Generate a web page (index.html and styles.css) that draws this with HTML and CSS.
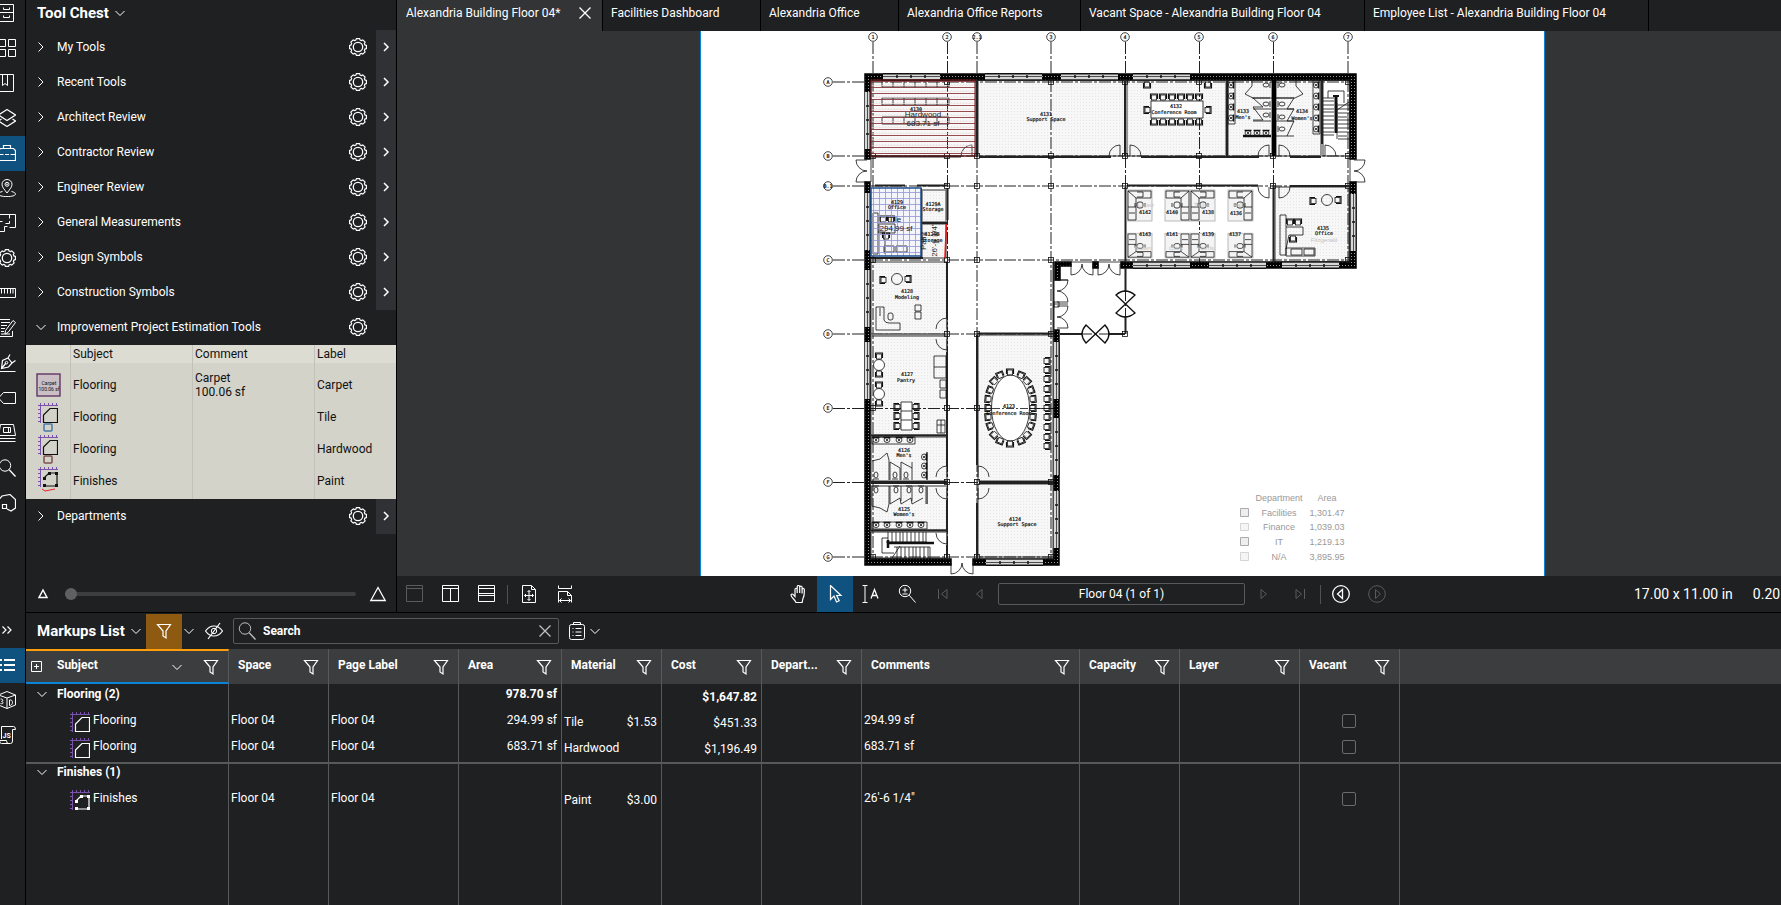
FILE: index.html
```html
<!DOCTYPE html>
<html lang="en">
<head>
<meta charset="utf-8">
<title>Alexandria Building Floor 04</title>
<link rel="stylesheet" href="styles.css">
</head>
<body>
<svg class="defs" aria-hidden="true">
  <symbol id="i-gear" viewBox="-9 -9 18 18"><path stroke-width="1.2" d="M8.4 1.6 6.9 2.1 6.4 3.4 7.1 4.8 4.8 7.1 3.4 6.4 2.1 6.9 1.6 8.4-1.6 8.4-2.1 6.9-3.4 6.4-4.8 7.1-7.1 4.8-6.4 3.4-6.9 2.1-8.4 1.6-8.4-1.6-6.9-2.1-6.4-3.4-7.1-4.8-4.8-7.1-3.4-6.4-2.1-6.9-1.6-8.4 1.6-8.4 2.1-6.9 3.4-6.4 4.8-7.1 7.1-4.8 6.4-3.4 6.9-2.1 8.4-1.6z"/><circle r="4.7" stroke-width="1.3"/></symbol>
  <symbol id="i-right" viewBox="-9 -9 18 18"><path d="M-2.5-4.5 2-0-2.5 4.5"/></symbol>
  <symbol id="i-rightb" viewBox="-9 -9 18 18"><path stroke-width="1.5" d="M-2-4 2 0-2 4"/></symbol>
  <symbol id="i-down" viewBox="-9 -9 18 18"><path d="M-4.5-2 0 2.5 4.5-2"/></symbol>
  <symbol id="i-x" viewBox="-9 -9 18 18"><path stroke-width="1.3" d="M-5.5-5.5 5.5 5.5M5.5-5.5-5.5 5.5"/></symbol>
  <symbol id="i-cabinet" viewBox="-9 -9 18 18"><path d="M-7.5-8.5h14v17h-14zM-7.5-.5h14M-3.5-5.500v2h6v-2M-3.500 2.500v2h6v-2"/></symbol>
  <symbol id="i-grid" viewBox="-9 -9 18 18"><path d="M-8.500-8.500h7v7h-7zM1.500-8.500h7v7h-7zM-8.500 1.500h7v7h-7zM1.500 1.500h7v7h-7z"/></symbol>
  <symbol id="i-book" viewBox="-9 -9 18 18"><path d="M-7.500-8.500h14v17h-14zM-4.500-8.500V2.500L-2 .500.500 2.500V-8.500"/></symbol>
  <symbol id="i-layers" viewBox="-9 -9 18 18"><path stroke-width="1.200" d="M0-8.500 8.500-3 0 2.500-8.500-3zM-5.500 1-8.500 3 0 8.500 8.500 3 5.500 1"/></symbol>
  <symbol id="i-chest" viewBox="-9 -9 18 18"><path stroke-width="1.200" d="M-8.500-2.500l2-2h13l2 2v10h-17zM-3.500-4.500v-3h7v3M-8.500 1.500h5M-2 1.500h4M3.500 1.500h5"/></symbol>
  <symbol id="i-pin" viewBox="-9 -9 18 18"><path d="M0 5C-3 1-5-1-5-3.700a5 4.800 0 0 1 10 0C5-1 3 1 0 5zM-4.500 3.500C-7 4-8.500 5-8.500 6c0 1.500 3.500 2.600 8.500 2.600S8.500 7.500 8.500 6c0-1-1.500-2-4-2.500"/><circle cy="-3.700" r="2"/><circle cy="-3.700" r=".5"/></symbol>
  <symbol id="i-plan" viewBox="-9 -9 18 18"><path d="M-8.500-8.500h17v13h-6M-8.500-8.500v17h6v-5h3M2.500-8.500v4M2.500-2v2.500h-4M-8.500-1.500h4"/></symbol>
  <symbol id="i-ruler" viewBox="-9 -9 18 18"><path d="M-8.500-4.500h17v9h-17zM-5.500-4.500v5M-2.500-4.500v5M.500-4.500v5M3.500-4.500v5M6-4.500v5"/></symbol>
  <symbol id="i-edit" viewBox="-9 -9 18 18"><path d="M3-8.500H-8.500v17H5.500V3M-6-5.500h9M-6-2.500h6M-6 .500h4M-6 3.500h3M-6 6h9"/><path d="M8.500-5.500 1 4.500l-3 1.500.5-3.500L6-7.500z"/></symbol>
  <symbol id="i-pen" viewBox="-9 -9 18 18"><path stroke-width="1.200" d="M-8.500 8.500h17M-5.500 5.500l1-8L1-5l4 5-3.500 4zM-5.500 5.500-1 0M1-5l2-3.500M5 0l3.500-2.500"/><circle r="1.300" cx="-.5" cy="-.3"/></symbol>
  <symbol id="i-tag" viewBox="-9 -9 18 18"><path d="M8.500-5.500h-12L-8.500 0l5 5.500h12z"/></symbol>
  <symbol id="i-stack" viewBox="-9 -9 18 18"><path d="M-6.500-8.500h13l2 11h-17zM-3.500-5.500h7v5h-7zM1.500-5v4M-8.500 5.500h17M-8.500 8.500h17M-8.500 2.500v6"/></symbol>
  <symbol id="i-search" viewBox="-9 -9 18 18"><circle cx="-2" cy="-2.500" r="5.700"/><path stroke-width="1.300" d="M2.200 1.700 8.500 8.500"/></symbol>
  <symbol id="i-shape" viewBox="-9 -9 18 18"><path stroke-width="1.200" d="M-8 6.500v-10l3-3.500 8-1.500 5.500 5V5L4 8l-4-2M-4.500 1.500h4v4h-4z"/></symbol>
  <symbol id="i-dbl" viewBox="-9 -9 18 18"><path stroke-width="1.200" d="M-4.500-3.500-1 0-4.500 3.500M.500-3.500 4 0 .500 3.500"/></symbol>
  <symbol id="i-list" viewBox="-9 -9 18 18"><path stroke-width="2" d="M-3-5H8M-3 0H8M-3 5H8M-7-5h2M-7 0h2M-7 5h2"/></symbol>
  <symbol id="i-3d" viewBox="-9 -9 18 18"><path d="M0-8.500 8.500-5v10L0 8.500-8.500 5V-5zM-8.500-5 0-2 8.500-5M0-2V8.500M-6.500-1c3 0 3 2 1 2.500 2.500.5 2 3-1 2M2.500 0v5.500c4 0 4-6.500 0-5.500z"/></symbol>
  <symbol id="i-js" viewBox="-9 -9 18 18"><path d="M-5.500 4V-8.500h12q2 0 2 3h-3V6q0 2.500-2 2.500h-9q-2 0-2-3h7q0 3 2 3"/><text x="-4.500" y="2.500" class="js">JS</text></symbol>
  <symbol id="i-filter" viewBox="-9 -9 18 18"><path stroke-width="1.200" d="M-6.500-6.500h13L2 0v7l-3-2V0z"/></symbol>
  <symbol id="i-eye" viewBox="-9 -9 18 18"><path stroke-width="1.200" d="M-8.500 0Q-5-5 0-5t8.500 5Q5 5 0 5T-8.500 0zM-6 8 6-8"/><circle r="2.700"/></symbol>
  <symbol id="i-clip" viewBox="-9 -9 18 18"><rect x="-7.500" y="-6.500" width="15" height="15" rx="2"/><path d="M-3.500-6.500v-2h7v2zM-4.500-2.500h1M-4.500 1h1M-4.500 4.500h1M-1.500-2.500h6M-1.500 1h6M-1.500 4.500h6"/></symbol>
  <symbol id="i-single" viewBox="-9 -9 18 18"><path d="M-8.500-8.500h16v16h-16zM-8.500-5.500h16"/></symbol>
  <symbol id="i-cols" viewBox="-9 -9 18 18"><path d="M-8.500-8.500h16v16h-16zM-8.500-5.500h16M-.500-5.500v13"/></symbol>
  <symbol id="i-rows" viewBox="-9 -9 18 18"><path d="M-8.500-8.500h16v16h-16zM-8.500-5.500h16M-8.500-.500h16M-8.500 1.500h16"/></symbol>
  <symbol id="i-fitpage" viewBox="-9 -9 18 18"><path d="M-6.500-8.500h9l4 4v13h-13zM2.500-8.500v4h4M-4.500 1.500h9M0-3.500v10M-3 0-4.500 1.500-3 3M3 0l1.500 1.500L3 3M-1.500-2 0-3.500 1.500-2M-1.500 5 0 6.500 1.500 5"/></symbol>
  <symbol id="i-fitwidth" viewBox="-9 -9 18 18"><path d="M-6.500-8.500v3h13v-3M-6.500 8.500v-11h9l4 4v7M2.500-2.500v4h4M-5.500 6.500h11M-3.500 4.500l-2 2 2 2M3.500 4.500l2 2-2 2"/></symbol>
  <symbol id="i-hand" viewBox="-9 -9 18 18"><path stroke-width="1.200" d="M-3 8.500c-1-3-5-5-5-7.500 0-1.300 1.700-1.300 2.500-.2l1.500 1.700v-7c0-1.700 2-1.700 2.200 0V-1v-6c0-2 2.400-2 2.500 0v6-5.500c0-1.800 2.300-1.800 2.400 0V-.500v-4c0-1.600 2.100-1.600 2.200 0 .3 5-.3 7-1.300 9-.6 1.300-.5 2.500-.8 4z"/></symbol>
  <symbol id="i-arrow" viewBox="-9 -9 18 18"><path stroke-width="1.200" d="M-4.500-8.500v14l3.500-3.500 2.500 6 2.700-1.200L1.700 1.500H6z"/></symbol>
  <symbol id="i-text" viewBox="-9 -9 18 18"><path d="M-8.500-8.500h5M-6-8.500v17M-8.500 8.500h5"/><path stroke-width="1.300" d="M0 4.500 3.500-4.500 7 4.500M1.200 1.500h4.500"/></symbol>
  <symbol id="i-zoom" viewBox="-9 -9 18 18"><circle cx="-2" cy="-3" r="5.700"/><path d="M2.200 1.200 8.500 8.500M-4.500-4h5M-2-6.500v5M-4.500 0h5"/></symbol>
  <symbol id="i-first" viewBox="-9 -9 18 18"><path d="M-4.500-5v10M4-4.500v9L-1.500 0z"/></symbol>
  <symbol id="i-prev" viewBox="-9 -9 18 18"><path d="M3-4.500v9L-2.500 0z"/></symbol>
  <symbol id="i-next" viewBox="-9 -9 18 18"><path d="M-3-4.500v9L2.500 0z"/></symbol>
  <symbol id="i-last" viewBox="-9 -9 18 18"><path d="M4.500-5v10M-4-4.500v9L1.500 0z"/></symbol>
  <symbol id="i-back" viewBox="-9 -9 18 18"><circle r="8.300" stroke-width="1.300"/><path stroke-width="1.300" d="M1.500-4.500v9L-3.500 0z"/></symbol>
  <symbol id="i-fwd" viewBox="-9 -9 18 18"><circle r="8.300"/><path d="M-1.500-4.500v9L3.500 0z"/></symbol>
  <symbol id="i-plus" viewBox="-9 -9 18 18"><path d="M-5.500-5.500h10v10h-10zM-3-.500h5M-.500-3v5"/></symbol>
  <symbol id="i-area" viewBox="0 0 20 20"><path class="tick" d="M2.500 0v20M0 2.500h20M6.500 0v2M10.500 0v2M14.500 0v2M18.500 0v2M0 6.500h2M0 10.500h2M0 14.500h2M0 18.500h2"/><path stroke-width="1.200" d="M5.500 19.500V12L12 5.500h7.500v14z"/></symbol>
  <symbol id="i-poly" viewBox="0 0 20 20"><path class="tick" d="M2.500 0v20M0 2.500h20M6.500 0v2M10.500 0v2M14.500 0v2M18.500 0v2M0 6.500h2M0 10.500h2M0 14.500h2M0 18.500h2"/><path stroke-width="1.200" d="M6 11l5-5h8v13H6"/><path fill="currentColor" stroke="none" d="M5 10h3v3H5zM10 5h3v3h-3zM17 5h3v3h-3zM17 17h3v3h-3zM5 17h3v3H5z"/></symbol>
</svg>

<main class="app">
  <section class="upper">
    <nav class="rail" aria-label="Panels">
      <button aria-label="File access"><svg class="ic"><use href="#i-cabinet"/></svg></button>
      <button aria-label="Thumbnails"><svg class="ic"><use href="#i-grid"/></svg></button>
      <button aria-label="Bookmarks"><svg class="ic"><use href="#i-book"/></svg></button>
      <button aria-label="Layers"><svg class="ic"><use href="#i-layers"/></svg></button>
      <button class="on" aria-label="Tool chest"><svg class="ic"><use href="#i-chest"/></svg></button>
      <button aria-label="Places"><svg class="ic"><use href="#i-pin"/></svg></button>
      <button aria-label="Spaces"><svg class="ic"><use href="#i-plan"/></svg></button>
      <button aria-label="Properties"><svg class="ic"><use href="#i-gear"/></svg></button>
      <button aria-label="Measurements"><svg class="ic"><use href="#i-ruler"/></svg></button>
      <button aria-label="Forms"><svg class="ic"><use href="#i-edit"/></svg></button>
      <button aria-label="Signatures"><svg class="ic"><use href="#i-pen"/></svg></button>
      <button aria-label="Tags"><svg class="ic"><use href="#i-tag"/></svg></button>
      <button aria-label="Sets"><svg class="ic"><use href="#i-stack"/></svg></button>
      <button aria-label="Search"><svg class="ic"><use href="#i-search"/></svg></button>
      <button aria-label="Studio"><svg class="ic"><use href="#i-shape"/></svg></button>
    </nav>

    <aside class="chest">
      <button class="title">Tool Chest <svg class="ic"><use href="#i-down"/></svg></button>
      <div class="tool"><button class="name"><svg class="ic"><use href="#i-right"/></svg>My Tools</button><button class="gear" aria-label="Options"><svg class="ic"><use href="#i-gear"/></svg></button><button class="more" aria-label="Open"><svg class="ic"><use href="#i-rightb"/></svg></button></div>
      <div class="tool"><button class="name"><svg class="ic"><use href="#i-right"/></svg>Recent Tools</button><button class="gear" aria-label="Options"><svg class="ic"><use href="#i-gear"/></svg></button><button class="more" aria-label="Open"><svg class="ic"><use href="#i-rightb"/></svg></button></div>
      <div class="tool"><button class="name"><svg class="ic"><use href="#i-right"/></svg>Architect Review</button><button class="gear" aria-label="Options"><svg class="ic"><use href="#i-gear"/></svg></button><button class="more" aria-label="Open"><svg class="ic"><use href="#i-rightb"/></svg></button></div>
      <div class="tool"><button class="name"><svg class="ic"><use href="#i-right"/></svg>Contractor Review</button><button class="gear" aria-label="Options"><svg class="ic"><use href="#i-gear"/></svg></button><button class="more" aria-label="Open"><svg class="ic"><use href="#i-rightb"/></svg></button></div>
      <div class="tool"><button class="name"><svg class="ic"><use href="#i-right"/></svg>Engineer Review</button><button class="gear" aria-label="Options"><svg class="ic"><use href="#i-gear"/></svg></button><button class="more" aria-label="Open"><svg class="ic"><use href="#i-rightb"/></svg></button></div>
      <div class="tool"><button class="name"><svg class="ic"><use href="#i-right"/></svg>General Measurements</button><button class="gear" aria-label="Options"><svg class="ic"><use href="#i-gear"/></svg></button><button class="more" aria-label="Open"><svg class="ic"><use href="#i-rightb"/></svg></button></div>
      <div class="tool"><button class="name"><svg class="ic"><use href="#i-right"/></svg>Design Symbols</button><button class="gear" aria-label="Options"><svg class="ic"><use href="#i-gear"/></svg></button><button class="more" aria-label="Open"><svg class="ic"><use href="#i-rightb"/></svg></button></div>
      <div class="tool"><button class="name"><svg class="ic"><use href="#i-right"/></svg>Construction Symbols</button><button class="gear" aria-label="Options"><svg class="ic"><use href="#i-gear"/></svg></button><button class="more" aria-label="Open"><svg class="ic"><use href="#i-rightb"/></svg></button></div>
      <div class="tool open"><button class="name"><svg class="ic"><use href="#i-down"/></svg>Improvement Project Estimation Tools</button><button class="gear" aria-label="Options"><svg class="ic"><use href="#i-gear"/></svg></button></div>
      <table class="set">
        <colgroup><col class="c-icon"><col class="c-wide"><col class="c-wide"><col></colgroup>
        <thead><tr><th></th><th>Subject</th><th>Comment</th><th>Label</th></tr></thead>
        <tbody>
          <tr class="gap"><td></td><td></td><td></td><td></td></tr>
          <tr><td><svg class="thumb" viewBox="0 0 28 32"><rect x="3" y="5" width="23" height="22" fill="#c9bfc5" stroke="#5a2a5e" stroke-width="1.300"/><text x="15" y="16" class="tiny">Carpet</text><text x="15" y="22" class="tiny">100.06 sf</text></svg></td><td>Flooring</td><td>Carpet<br>100.06 sf</td><td>Carpet</td></tr>
          <tr><td><svg class="thumb" viewBox="0 0 28 32"><use href="#i-area" x="4" y="2" width="20" height="20"/><rect x="10" y="23" width="8" height="7" rx="1" stroke="#4a7ba6" stroke-width="1.500"/></svg></td><td>Flooring</td><td></td><td>Tile</td></tr>
          <tr><td><svg class="thumb" viewBox="0 0 28 32"><use href="#i-area" x="4" y="2" width="20" height="20"/><rect x="10" y="23" width="8" height="7" rx="1" stroke="#7d5050" stroke-width="1.500"/></svg></td><td>Flooring</td><td></td><td>Hardwood</td></tr>
          <tr><td><svg class="thumb" viewBox="0 0 28 32"><use href="#i-poly" x="4" y="2" width="20" height="20"/><path d="M8 24l3 2 10-2" stroke="#e22"/></svg></td><td>Finishes</td><td></td><td>Paint</td></tr>
          <tr class="end"><td></td><td></td><td></td><td></td></tr>
        </tbody>
      </table>
      <div class="tool"><button class="name"><svg class="ic"><use href="#i-right"/></svg>Departments</button><button class="gear" aria-label="Options"><svg class="ic"><use href="#i-gear"/></svg></button><button class="more" aria-label="Open"><svg class="ic"><use href="#i-rightb"/></svg></button></div>
      <div class="size">
        <svg class="ic" viewBox="-9 -9 18 18"><path stroke-width="1.500" d="M0-4 4 3.500H-4z"/></svg>
        <input type="range" min="0" max="100" value="0" aria-label="Symbol size">
        <svg class="ic" viewBox="-9 -9 18 18"><path stroke-width="1.300" d="M0-6.500 7.200 6.500H-7.200z"/></svg>
      </div>
    </aside>

    <section class="doc">
      <div class="tabs" role="tablist">
        <button class="tab cur">Alexandria Building Floor 04*<svg class="ic"><use href="#i-x"/></svg></button>
        <button class="tab t2">Facilities Dashboard</button>
        <button class="tab t3">Alexandria Office</button>
        <button class="tab t4">Alexandria Office Reports</button>
        <button class="tab t5">Vacant Space - Alexandria Building Floor 04</button>
        <button class="tab t5">Employee List - Alexandria Building Floor 04</button>
      </div>
      <div class="canvas">
        <div class="page">
        <svg class="plan" viewBox="701 31 843 545" preserveAspectRatio="xMinYMin slice" role="img" aria-label="Floor plan">
          <defs>
            <pattern id="dots" width="3" height="3" patternUnits="userSpaceOnUse"><rect width="3" height="3" fill="#f7f7f7"/><rect width="1" height="1" fill="#e6e6e6"/></pattern>
            <pattern id="hatch" width="3" height="3" patternUnits="userSpaceOnUse"><rect width="3" height="3" fill="#000"/><rect x="1" y="1" width="1" height="1" fill="#999"/></pattern>
            <pattern id="wood" width="10" height="6" y="3" patternUnits="userSpaceOnUse"><path d="M0 .500h10" stroke="#8c3a3e" stroke-width=".9"/><path d="M0 4.500h10" stroke="#eed6d8" stroke-width=".5"/></pattern>
            <pattern id="tile" width="6" height="6" x="3" patternUnits="userSpaceOnUse"><path d="M.500 0v6M0 .500h6" stroke="#9394d6" stroke-width=".8"/></pattern>
            <g id="chair"><rect x="-2.500" y="-2" width="5" height="5"/><path d="M-3.500 2v-5h7v5" stroke-width="1.100"/></g>
            <g id="toilet"><ellipse cy="1" rx="2" ry="3"/><path d="M-3-3h6"/></g>
            <g id="sink"><ellipse rx="3" ry="2.500"/><path d="M-3.500-2.500h7M0-1v2" stroke-width="1.500"/></g>
            <g id="door"><path d="M0 0v-11M0-11A11 11 0 0 0-11 0"/></g>
            <g id="dbl"><path d="M0-11h11M0 11h11M0-11A11 11 0 0 0 11 0M0 11A11 11 0 0 1 11 0"/></g>
            <g id="win"><rect width="57" height="7" fill="#d8d8d8" stroke="none"/><path d="M0 .800h57" stroke-width="1.400"/><path d="M0 3.500h57M0 6.500h57" stroke-width=".7"/><path d="M14 2v3M28 2v3M42 2v3" stroke-width="1.500"/></g>
            <g id="desk"><rect width="25" height="31" fill="#f4f4f4" stroke="#aaa"/><path d="M1 1h23v7H9v22H1zM1 1l8 7M10 2h6v5h-6M1 17h8M2 23h6"/><rect x="10" y="12" width="6" height="6" rx="2"/><path d="M8 13v4M18 13v4"/></g>
            <rect id="post" x="-2.500" y="-2.500" width="5" height="5"/>
            <circle id="bub" r="4.300" fill="#fff"/>
          </defs>
          <!-- room fills -->
          <g fill="url(#dots)" stroke="#777" stroke-width="1.500">
            <path d="M871 80h105v76H871zM978 80h147v76H978zM1127 80h99v76h-99zM1228 80h44v76h-44zM1276 80h45v76h-45z"/>
            <path d="M922 190h24v32h-24zM922 224h24v34h-24zM1275 187h74v75h-74z"/>
            <path d="M871 262h76v72h-76zM871 336h76v99h-76zM871 437h76v44h-76zM871 486h76v44h-76z"/>
            <path d="M978 335h75v146h-75zM978 484h75v73h-75z"/>
          </g>
          <path d="M871 532h76v26h-76zM1323 80h27v76h-27z" fill="#fff" stroke="#333"/>
          <!-- grid -->
          <g class="grid">
            <path d="M873 42v520M947.500 42v520M977 42v520M1051 42v520M1125.500 42v290M1199.500 42v222M1273.500 42v222M1348 42v222"/>
            <path d="M833 82h518M833 156h518M833 186h518M833 260h518M833 334h292M833 408.500h222M833 482.500h222M833 557h222"/>
          </g>
          <g class="ln">
            <use href="#bub" x="873" y="37"/><use href="#bub" x="947" y="37"/><use href="#bub" x="977" y="37"/><use href="#bub" x="1051" y="37"/><use href="#bub" x="1125" y="37"/><use href="#bub" x="1199" y="37"/><use href="#bub" x="1273" y="37"/><use href="#bub" x="1348" y="37"/>
            <use href="#bub" x="828" y="82"/><use href="#bub" x="828" y="156"/><use href="#bub" x="828" y="186"/><use href="#bub" x="828" y="260"/><use href="#bub" x="828" y="334"/><use href="#bub" x="828" y="408"/><use href="#bub" x="828" y="482"/><use href="#bub" x="828" y="557"/>
          </g>
          <g class="lbl">
            <text x="873" y="39">1</text><text x="947" y="39">2</text><text x="977" y="39">2.1</text><text x="1051" y="39">3</text><text x="1125" y="39">4</text><text x="1199" y="39">5</text><text x="1273" y="39">6</text><text x="1348" y="39">7</text>
            <text x="828" y="84">A</text><text x="828" y="158">B</text><text x="828" y="188">B.1</text><text x="828" y="262">C</text><text x="828" y="336">D</text><text x="828" y="410">E</text><text x="828" y="484">F</text><text x="828" y="559">G</text>
          </g>
          <!-- outer walls -->
          <g fill="url(#hatch)" stroke="#000" stroke-width="1.500">
            <path d="M865 74h491v85h-6V80H870v79h-5zM865 182h5v377h81v6h-86zM1350 182h6v86h-235v-6h229zM973 559h81V330h5v235h-86z"/>
            <path d="M1055 262h16v4h-11v14h-5zM1093 262h5v6h-5z"/>
          </g>
          <g class="ln">
            <use href="#win" x="883" y="73"/><use href="#win" x="985" y="73"/><use href="#win" x="1061" y="73"/><use href="#win" x="1133" y="73"/>
            <use href="#win" transform="translate(1133 269)scale(1 -1)"/><use href="#win" transform="translate(1209 269)scale(1 -1)"/><use href="#win" transform="translate(1282 269)scale(1 -1)"/><use href="#win" transform="translate(986 566)scale(1 -1)"/>
            <use href="#win" transform="translate(871 92)rotate(90)"/><use href="#win" transform="translate(871 193)rotate(90)"/><use href="#win" transform="translate(871 270)rotate(90)"/><use href="#win" transform="translate(871 342)rotate(90)"/>
            <use href="#win" transform="translate(1357 194)rotate(90)"/>
            <use href="#win" transform="translate(1060 342)rotate(90)"/><use href="#win" transform="translate(1060 418)rotate(90)"/><use href="#win" transform="translate(1060 491)rotate(90)"/>
            <path d="M871 159v23M1350 159v23"/>
          </g>
          <!-- inner walls -->
          <g stroke="#222" fill="none" stroke-width="2">
            <path d="M977 80v77M871 156.500h90M979 157h132M1125 80v76M1141 157h118M1227 80v76M1322 80v64M1290 157h31"/>
            <path d="M875 185.500h30M917 185.500h30M921 188v70M921 223h26M947.500 188v32M871 258h52"/>
            <path d="M1127 185.500h131M1273.500 185v77M1125.500 187v75M1290 186h60"/>
            <path d="M947 262v56M947 352v114M871 435.500h76M871 530.500h76M947 500v32M947 545v14"/>
            <path d="M977 333.500h76M977 335v130M977 503v56M1053.500 262v70"/>
            <path d="M871 334.500h76" stroke="#777"/>
            <path d="M871 482.500h76M979 482.500h74" stroke-width="3"/>
            <path d="M1274 80v76" stroke-width="4" stroke="#000"/>
            <path d="M1125.500 268v24M1125.500 316v18M1060 334h22M1108 334h17"/>
          </g>
          <g class="ln">
            <use href="#door" x="972" y="156"/><use href="#door" x="1120" y="156"/><use href="#door" transform="translate(1130 156)scale(-1 1)"/><use href="#door" x="1269" y="156"/><use href="#door" transform="translate(1279 156)scale(-1 1)"/><use href="#door" transform="translate(1325 156)scale(-1 1)"/>
            <use href="#door" transform="translate(917 187)scale(1 -1)"/><use href="#door" transform="translate(1269 187)scale(1 -1)"/><use href="#door" transform="translate(1279 187)scale(-1 -1)"/>
            <use href="#door" x="947" y="329"/><use href="#door" transform="translate(947 339)scale(1 -1)"/><use href="#door" x="947" y="477"/><use href="#door" transform="translate(947 488)scale(1 -1)"/><use href="#door" transform="translate(947 533)scale(1 -1)"/>
            <use href="#door" transform="translate(978 477)scale(-1 1)"/><use href="#door" transform="translate(978 488)scale(-1 -1)"/>
            <use href="#dbl" transform="translate(856 171)"/><use href="#dbl" transform="translate(1365 171)scale(-1 1)"/>
            <use href="#dbl" transform="translate(962 574)rotate(-90)"/><use href="#dbl" transform="translate(1082 275)rotate(-90)"/><use href="#dbl" transform="translate(1109 275)rotate(-90)"/>
            <use href="#dbl" transform="translate(1068 291)scale(-1 1)"/><use href="#dbl" transform="translate(1068 317)scale(-1 1)"/>
            <path d="M1054 280h14M1054 304h14M1071 262h54M1054 302h5v5h-5z"/>
            <path stroke-width="1.300" d="M1116 295Q1125 287 1135 295L1116 313Q1125 321 1135 313zM1086 325Q1078 334 1086 343L1105 325Q1113 334 1105 343z"/>
          </g>
          <g class="ln" fill="#fff">
            <use href="#post" x="947" y="82"/><use href="#post" x="1051" y="82"/><use href="#post" x="1125" y="82"/><use href="#post" x="1199" y="82"/><use href="#post" x="1348" y="82"/>
            <use href="#post" x="873" y="156"/><use href="#post" x="947" y="156"/><use href="#post" x="977" y="156"/><use href="#post" x="1051" y="156"/><use href="#post" x="1125" y="156"/><use href="#post" x="1199" y="156"/><use href="#post" x="1273" y="156"/><use href="#post" x="1348" y="156"/>
            <use href="#post" x="947" y="186"/><use href="#post" x="977" y="186"/><use href="#post" x="1051" y="186"/><use href="#post" x="1125" y="186"/><use href="#post" x="1199" y="186"/><use href="#post" x="1273" y="186"/><use href="#post" x="1348" y="186"/>
            <use href="#post" x="873" y="260"/><use href="#post" x="947" y="260"/><use href="#post" x="977" y="260"/><use href="#post" x="1051" y="260"/><use href="#post" x="1348" y="260"/>
            <use href="#post" x="947" y="334"/><use href="#post" x="977" y="334"/><use href="#post" x="1051" y="334"/><use href="#post" x="1125" y="334"/><use href="#post" x="873" y="408"/><use href="#post" x="947" y="408"/><use href="#post" x="977" y="408"/><use href="#post" x="947" y="482"/><use href="#post" x="977" y="482"/><use href="#post" x="1051" y="482"/><use href="#post" x="873" y="557"/><use href="#post" x="947" y="557"/><use href="#post" x="977" y="557"/><use href="#post" x="1051" y="557"/>
          </g>
          <!-- storage shelving and hardwood takeoff -->
          <g class="ln"><path d="M882 80h67v7h-67zM893 80v7M904 80v7M915 80v7M926 80v7M937 80v7M882 98h67v7h-67zM893 98v7M904 98v7M915 98v7M926 98v7M937 98v7M882 117h67v7h-67zM893 117v7M904 117v7M915 117v7M926 117v7M937 117v7"/></g>
          <rect x="871" y="80" width="104" height="76" fill="url(#wood)" stroke="#6e1418"/>
          <!-- office 4129 and tile takeoff -->
          <rect x="871" y="188" width="50" height="68" fill="#f4f4fb"/>
          <g class="ln"><path d="M873 213h5v41h-5zM878 232h7v22M884 246h10v6h-10zM896 246h11v6h-11zM879 224h16v9h-16z"/><use href="#chair" x="883" y="219"/><use href="#chair" x="891" y="219"/><use href="#chair" x="886" y="236"/></g>
          <rect x="871" y="188" width="50" height="68" fill="url(#tile)" stroke="#1d4f91" stroke-width="1.500"/>
          <path d="M946.500 224 945 258" stroke="#e11" stroke-width="1.600"/>
          <!-- conference 4132 -->
          <g class="ln">
            <rect x="1151" y="101" width="52" height="17" fill="#fff"/>
            <use href="#chair" x="1154" y="97"/><use href="#chair" x="1163" y="97"/><use href="#chair" x="1172" y="97"/><use href="#chair" x="1181" y="97"/><use href="#chair" x="1190" y="97"/><use href="#chair" x="1199" y="97"/>
            <use href="#chair" transform="translate(1154 122)scale(1 -1)"/><use href="#chair" transform="translate(1163 122)scale(1 -1)"/><use href="#chair" transform="translate(1172 122)scale(1 -1)"/><use href="#chair" transform="translate(1181 122)scale(1 -1)"/><use href="#chair" transform="translate(1190 122)scale(1 -1)"/><use href="#chair" transform="translate(1199 122)scale(1 -1)"/>
            <use href="#chair" transform="translate(1147 110)rotate(-90)"/><use href="#chair" transform="translate(1208 110)rotate(90)"/><use href="#chair" transform="translate(1147 85)scale(1 -1)"/><use href="#chair" transform="translate(1208 85)scale(1 -1)"/>
          </g>
          <!-- restrooms 4133 / 4134 -->
          <g class="ln">
            <path d="M1228 80h7v44h-7zM1252 80v6l-7 8 8 4h19M1252 98h18M1253 98l10 9h-10l10 13h-10M1253 109h18M1253 121h18"/><path d="M1243 136h28" stroke-width="2.500"/>
            <path d="M1296 80v6l7 8-8 4h-19M1276 98h18l-7 11h7l-7 12h7l-7 15M1276 109h18M1276 121h18M1276 136h18M1313 80h7v54h-7z"/>
            <use href="#sink" transform="translate(1231 85)rotate(90)"/><use href="#sink" transform="translate(1231 96)rotate(90)"/><use href="#sink" transform="translate(1231 107)rotate(90)"/><use href="#sink" transform="translate(1231 118)rotate(90)"/>
            <use href="#sink" transform="translate(1316 85)rotate(90)"/><use href="#sink" transform="translate(1316 96)rotate(90)"/><use href="#sink" transform="translate(1316 107)rotate(90)"/><use href="#sink" transform="translate(1316 118)rotate(90)"/><use href="#sink" transform="translate(1316 129)rotate(90)"/>
            <use href="#toilet" transform="translate(1267 85)rotate(90)"/><use href="#toilet" transform="translate(1267 104)rotate(90)"/><use href="#toilet" transform="translate(1267 115)rotate(90)"/>
            <use href="#toilet" transform="translate(1281 85)rotate(-90)"/><use href="#toilet" transform="translate(1281 104)rotate(-90)"/><use href="#toilet" transform="translate(1281 117)rotate(-90)"/><use href="#toilet" transform="translate(1281 129)rotate(-90)"/>
            <use href="#sink" x="1248" y="133"/><use href="#sink" x="1257" y="133"/><use href="#sink" x="1266" y="133"/>
            <path d="M1323 98h11M1323 101h11M1323 105h11M1323 109h11M1323 112h11M1323 116h11M1323 120h11M1323 124h11M1323 128h11M1323 132h11M1323 135h11M1338 105h12M1338 109h12M1338 113h12M1338 117h12M1338 120h12M1338 124h12M1338 128h12M1338 132h12M1338 136h12M1338 139h12M1337 103v36M1328 98v-7h16v12M1337 110l12-8"/><path d="M1336 96v37" stroke-width="3"/><path d="M1333 96h6" stroke-width="2"/>
          </g>
          <!-- workstations -->
          <g class="ln">
            <use href="#desk" x="1127" y="190"/><use href="#desk" transform="translate(1190 190)scale(-1 1)"/><use href="#desk" x="1190" y="190"/><use href="#desk" transform="translate(1253 190)scale(-1 1)"/>
            <use href="#desk" transform="translate(1127 258)scale(1 -.8)"/><use href="#desk" transform="translate(1190 258)scale(-1 -.8)"/><use href="#desk" transform="translate(1190 258)scale(1 -.8)"/><use href="#desk" transform="translate(1253 258)scale(-1 -.8)"/>
          </g>
          <!-- office 4135 -->
          <g class="ln"><circle cx="1327" cy="200" r="5.500"/><use href="#chair" transform="translate(1313 201)rotate(-90)"/><use href="#chair" transform="translate(1338 200)rotate(90)"/><path d="M1280 215h6v40h-6zM1286 227h17v8h-14l-3 14M1286 248h29v8h-29zM1291 249h11v6h-11zM1304 249h10v6h-10z"/><use href="#chair" x="1290" y="222"/><use href="#chair" x="1298" y="222"/><use href="#chair" transform="translate(1293 239)scale(1 -1)"/></g>
          <!-- modeling 4128 -->
          <g class="ln"><circle cx="897" cy="279" r="5.500"/><use href="#chair" transform="translate(883 280)rotate(-90)"/><use href="#chair" transform="translate(908 279)rotate(90)"/><path d="M876 307h8v13q1 3 5 3h11v7h-24zM880 308v8M915 305h6v6h-6zM915 312h6v7h-6z"/><rect x="888" y="313" width="5" height="7" rx="2"/></g>
          <!-- pantry 4127 -->
          <g class="ln"><circle cx="879" cy="365" r="5.500" fill="#fff"/><circle cx="879" cy="394" r="5.500" fill="#fff"/><use href="#chair" x="879" y="356"/><use href="#chair" transform="translate(879 374)scale(1 -1)"/><use href="#chair" x="879" y="385"/><use href="#chair" transform="translate(879 403)scale(1 -1)"/>
            <path d="M901 402h11v28h-11zM901 411h11M901 420h11" fill="#fff"/>
            <use href="#chair" transform="translate(897 407)rotate(-90)"/><use href="#chair" transform="translate(897 416)rotate(-90)"/><use href="#chair" transform="translate(897 426)rotate(-90)"/><use href="#chair" transform="translate(916 407)rotate(90)"/><use href="#chair" transform="translate(916 416)rotate(90)"/><use href="#chair" transform="translate(916 426)rotate(90)"/>
            <path d="M934 356h12v22h-12zM934 367h12M940 380h6v8h-6zM940 390h6v8h-6zM937 420h8v13h-8zM937 425h8M941 420v13"/></g>
          <!-- restrooms 4126 / 4125 -->
          <g class="ln">
            <path d="M872 437h43v7h-43zM872 461l8-2 7-6 2 7v20M890 480v-18l10 6v12M901 480v-18l11 6M912 462v18M872 486v20l8 2 7 4 2-8v-18M890 486v18l10-6 1 6 10-6 1 6 11-6M901 486v15M912 486v15M926 486v18M872 522h55v7h-55z"/>
            <path d="M927 452v28M927 486v18" stroke-width="2" stroke="#666"/>
            <use href="#sink" x="876" y="440"/><use href="#sink" x="887" y="440"/><use href="#sink" x="899" y="440"/><use href="#sink" x="910" y="440"/>
            <use href="#sink" x="876" y="525"/><use href="#sink" x="887" y="525"/><use href="#sink" x="899" y="525"/><use href="#sink" x="910" y="525"/><use href="#sink" x="921" y="525"/>
            <use href="#toilet" transform="translate(876 476)scale(1 -1)"/><use href="#toilet" transform="translate(895 476)scale(1 -1)"/><use href="#toilet" transform="translate(906 476)scale(1 -1)"/>
            <use href="#toilet" x="876" y="489"/><use href="#toilet" x="896" y="489"/><use href="#toilet" x="909" y="489"/><use href="#toilet" x="921" y="489"/>
            <use href="#sink" transform="translate(924 457)rotate(90)"/><use href="#sink" transform="translate(924 466)rotate(90)"/><use href="#sink" transform="translate(924 475)rotate(90)"/>
            <path d="M888 532v10M892 532v10M896 532v10M900 532v10M903 532v10M907 532v10M911 532v10M915 532v10M919 532v10M923 532v10M926 532v10M897 547v12M901 547v12M905 547v12M909 547v12M913 547v12M916 547v12M920 547v12M924 547v12M928 547v12M930 547v12M894 547h36M888 538h-6v15h12M892 558l8-12M886 542h41"/><path d="M888 543h46M888 540v8" stroke-width="2.500"/>
          </g>
          <!-- conference 4123 -->
          <g class="ln">
            <ellipse cx="1010.500" cy="408" rx="19" ry="33" fill="#fff"/>
            <use href="#chair" x="1010" y="372"/><use href="#chair" transform="translate(1000 375)rotate(-22)"/><use href="#chair" transform="translate(1021 375)rotate(22)"/><use href="#chair" transform="translate(994 381)rotate(-45)"/><use href="#chair" transform="translate(1027 381)rotate(45)"/><use href="#chair" transform="translate(990 390)rotate(-70)"/><use href="#chair" transform="translate(1031 390)rotate(70)"/><use href="#chair" transform="translate(988 399)rotate(-85)"/><use href="#chair" transform="translate(1033 399)rotate(85)"/><use href="#chair" transform="translate(988 408)rotate(-90)"/><use href="#chair" transform="translate(1033 408)rotate(90)"/><use href="#chair" transform="translate(988 417)rotate(-95)"/><use href="#chair" transform="translate(1033 417)rotate(95)"/><use href="#chair" transform="translate(990 426)rotate(-110)"/><use href="#chair" transform="translate(1031 426)rotate(110)"/><use href="#chair" transform="translate(994 435)rotate(-135)"/><use href="#chair" transform="translate(1027 435)rotate(135)"/><use href="#chair" transform="translate(1000 441)rotate(-158)"/><use href="#chair" transform="translate(1021 441)rotate(158)"/><use href="#chair" transform="translate(1010 444)rotate(180)"/>
            <use href="#chair" transform="translate(1047 361)rotate(90)"/><use href="#chair" transform="translate(1047 370)rotate(90)"/><use href="#chair" transform="translate(1047 379)rotate(90)"/><use href="#chair" transform="translate(1047 389)rotate(90)"/><use href="#chair" transform="translate(1047 399)rotate(90)"/><use href="#chair" transform="translate(1047 408)rotate(90)"/><use href="#chair" transform="translate(1047 417)rotate(90)"/><use href="#chair" transform="translate(1047 427)rotate(90)"/><use href="#chair" transform="translate(1047 437)rotate(90)"/><use href="#chair" transform="translate(1047 446)rotate(90)"/>
            <path d="M978 408.500h75" stroke-dasharray="8 2 2 2"/>
          </g>
          <!-- room labels -->
          <g class="lbl">
            <text x="916" y="111">4130</text><text x="1046" y="116">4131</text><text x="1046" y="121">Support Space</text>
            <text x="1176" y="108">4132</text><text x="1174" y="114">Conference Room</text>
            <text x="1243" y="113">4133</text><text x="1243" y="119">Men's</text><text x="1302" y="113">4134</text><text x="1302" y="120">Women's</text>
            <text x="897" y="204">4129</text><text x="897" y="209">Office</text><text x="933" y="206">4129A</text><text x="933" y="211">Storage</text><text x="932" y="236">4129B</text><text x="932" y="242">Storage</text>
            <text x="1145" y="214">4142</text><text x="1172" y="214">4140</text><text x="1208" y="214">4138</text><text x="1236" y="215">4136</text>
            <text x="1145" y="236">4143</text><text x="1172" y="236">4141</text><text x="1208" y="236">4139</text><text x="1235" y="236">4137</text>
            <text x="1323" y="230">4135</text><text x="1324" y="235">Office</text>
            <text x="907" y="293">4128</text><text x="907" y="299">Modeling</text><text x="907" y="376">4127</text><text x="906" y="382">Pantry</text>
            <text x="904" y="452">4126</text><text x="904" y="457">Men's</text><text x="904" y="511">4125</text><text x="904" y="516">Women's</text>
            <text x="1009" y="408">4123</text><text x="1009" y="415">Conference Room</text><text x="1015" y="521">4124</text><text x="1017" y="526">Support Space</text>
          </g>
          <g class="mk"><text x="923" y="117">Hardwood</text><text x="923" y="126">683.71 sf</text><text x="895" y="222">Tile</text><text x="896" y="231">294.99 sf</text><text transform="translate(926 241)rotate(-90)">Paint</text><text transform="translate(937 240)rotate(-90)">26'-6 1/4"</text></g>
          <g class="who"><text x="1146" y="207">Lopez</text><text x="1202" y="207">Taylor</text><text x="1238" y="207">Hall</text><text x="1143" y="250">Brown</text><text x="1176" y="250">Clark</text><text x="1206" y="250">Harris</text><text x="1324" y="242">Fitzgerald</text></g>
          <!-- department legend -->
          <g class="leg">
            <text x="1279" y="501">Department</text><text x="1327" y="501">Area</text>
            <text x="1279" y="516">Facilities</text><text x="1327" y="516">1,301.47</text>
            <text x="1279" y="530">Finance</text><text x="1327" y="530">1,039.03</text>
            <text x="1279" y="545">IT</text><text x="1327" y="545">1,219.13</text>
            <text x="1279" y="560">N/A</text><text x="1327" y="560">3,895.95</text>
            <path d="M1240.500 508.500h8v8h-8zM1240.500 537.500h8v8h-8z" fill="#eee" stroke="#aaa"/><path d="M1240.500 523.500h8v7h-8zM1240.500 552.500h8v8h-8z" fill="#f5f5f5" stroke="#d5d5d5"/>
          </g>
        </svg>
        </div>
      </div>
      <div class="bar">
        <div class="grp views">
          <button class="dim" aria-label="Unsplit"><svg class="ic"><use href="#i-single"/></svg></button>
          <button aria-label="Split vertical"><svg class="ic"><use href="#i-cols"/></svg></button>
          <button aria-label="Split horizontal"><svg class="ic"><use href="#i-rows"/></svg></button>
          <i class="sep"></i>
          <button aria-label="Fit page"><svg class="ic"><use href="#i-fitpage"/></svg></button>
          <button aria-label="Fit width"><svg class="ic"><use href="#i-fitwidth"/></svg></button>
        </div>
        <div class="grp nav">
          <button aria-label="Pan"><svg class="ic"><use href="#i-hand"/></svg></button>
          <button class="on" aria-label="Select"><svg class="ic"><use href="#i-arrow"/></svg></button>
          <button aria-label="Select text"><svg class="ic"><use href="#i-text"/></svg></button>
          <button aria-label="Zoom"><svg class="ic"><use href="#i-zoom"/></svg></button>
          <button class="dim" aria-label="First page"><svg class="ic"><use href="#i-first"/></svg></button>
          <button class="dim" aria-label="Previous page"><svg class="ic"><use href="#i-prev"/></svg></button>
          <input class="pageno" type="text" value="Floor 04 (1 of 1)" aria-label="Page">
          <button class="dim" aria-label="Next page"><svg class="ic"><use href="#i-next"/></svg></button>
          <button class="dim" aria-label="Last page"><svg class="ic"><use href="#i-last"/></svg></button>
          <i class="sep"></i>
          <button aria-label="Previous view"><svg class="ic"><use href="#i-back"/></svg></button>
          <button class="dim" aria-label="Next view"><svg class="ic"><use href="#i-fwd"/></svg></button>
        </div>
        <div class="dims"><span>17.00 x 11.00 in</span><span>0.20</span></div>
      </div>
    </section>
  </section>

  <section class="lower">
    <nav class="rail" aria-label="Bottom panels">
      <button aria-label="Expand"><svg class="ic"><use href="#i-dbl"/></svg></button>
      <button class="on" aria-label="Markups"><svg class="ic"><use href="#i-list"/></svg></button>
      <button aria-label="3D model tree"><svg class="ic"><use href="#i-3d"/></svg></button>
      <button aria-label="JavaScript console"><svg class="ic"><use href="#i-js"/></svg></button>
    </nav>
    <section class="markups">
      <header class="head">
        <button class="title">Markups List <svg class="ic"><use href="#i-down"/></svg></button>
        <button class="flt" aria-label="Filter"><svg class="ic"><use href="#i-filter"/></svg></button>
        <button class="drop" aria-label="Filter options"><svg class="ic"><use href="#i-down"/></svg></button>
        <button class="eye" aria-label="Hide markups"><svg class="ic"><use href="#i-eye"/></svg></button>
        <label class="find"><svg class="ic"><use href="#i-search"/></svg><input type="text" placeholder="Search" aria-label="Search"><svg class="ic"><use href="#i-x"/></svg></label>
        <button class="clip" aria-label="Summary"><svg class="ic"><use href="#i-clip"/></svg><svg class="ic"><use href="#i-down"/></svg></button>
      </header>
      <table class="list">
        <colgroup><col class="w203"><col class="w100"><col class="w130"><col class="w103"><col class="w100"><col class="w100"><col class="w100"><col class="w218"><col class="w100"><col class="w120"><col class="w100"><col></colgroup>
        <thead><tr>
          <th class="subj"><div><svg class="ic"><use href="#i-plus"/></svg><span>Subject</span><svg class="ic"><use href="#i-down"/></svg><svg class="ic f"><use href="#i-filter"/></svg></div></th>
          <th><div><span>Space</span><svg class="ic f"><use href="#i-filter"/></svg></div></th>
          <th><div><span>Page Label</span><svg class="ic f"><use href="#i-filter"/></svg></div></th>
          <th><div><span>Area</span><svg class="ic f"><use href="#i-filter"/></svg></div></th>
          <th><div><span>Material</span><svg class="ic f"><use href="#i-filter"/></svg></div></th>
          <th><div><span>Cost</span><svg class="ic f"><use href="#i-filter"/></svg></div></th>
          <th><div><span>Depart...</span><svg class="ic f"><use href="#i-filter"/></svg></div></th>
          <th><div><span>Comments</span><svg class="ic f"><use href="#i-filter"/></svg></div></th>
          <th><div><span>Capacity</span><svg class="ic f"><use href="#i-filter"/></svg></div></th>
          <th><div><span>Layer</span><svg class="ic f"><use href="#i-filter"/></svg></div></th>
          <th><div><span>Vacant</span><svg class="ic f"><use href="#i-filter"/></svg></div></th>
          <th></th>
        </tr></thead>
        <tbody>
          <tr class="group"><td><div class="g"><svg class="ic"><use href="#i-down"/></svg>Flooring (2)</div></td><td></td><td></td><td class="num">978.70 sf</td><td></td><td class="num low">$1,647.82</td><td></td><td></td><td></td><td></td><td></td><td></td></tr>
          <tr><td><div class="m"><svg class="mi"><use href="#i-area"/></svg>Flooring</div></td><td>Floor 04</td><td>Floor 04</td><td class="num">294.99 sf</td><td class="low"><div class="pair"><span>Tile</span><span>$1.53</span></div></td><td class="num low">$451.33</td><td></td><td>294.99 sf</td><td></td><td></td><td class="chk"><input type="checkbox" aria-label="Vacant"></td><td></td></tr>
          <tr><td><div class="m"><svg class="mi"><use href="#i-area"/></svg>Flooring</div></td><td>Floor 04</td><td>Floor 04</td><td class="num">683.71 sf</td><td class="low">Hardwood</td><td class="num low">$1,196.49</td><td></td><td>683.71 sf</td><td></td><td></td><td class="chk"><input type="checkbox" aria-label="Vacant"></td><td></td></tr>
          <tr class="group line"><td><div class="g"><svg class="ic"><use href="#i-down"/></svg>Finishes (1)</div></td><td></td><td></td><td></td><td></td><td></td><td></td><td></td><td></td><td></td><td></td><td></td></tr>
          <tr><td><div class="m"><svg class="mi"><use href="#i-poly"/></svg>Finishes</div></td><td>Floor 04</td><td>Floor 04</td><td></td><td class="low"><div class="pair"><span>Paint</span><span>$3.00</span></div></td><td></td><td></td><td>26'-6 1/4"</td><td></td><td></td><td class="chk"><input type="checkbox" aria-label="Vacant"></td><td></td></tr>
          <tr class="fill"><td></td><td></td><td></td><td></td><td></td><td></td><td></td><td></td><td></td><td></td><td></td><td></td></tr>
        </tbody>
      </table>
    </section>
  </section>
</main>
</body>
</html>
```

FILE: styles.css
```css
* { box-sizing: border-box; }
body { margin: 0; background: #1f2022; color: #fff; font: 12px/16px Roboto, "Liberation Sans", sans-serif; overflow: hidden; }
button, input { font: inherit; color: inherit; background: none; border: 0; padding: 0; margin: 0; }
button { display: flex; align-items: center; white-space: nowrap; }
.defs { position: absolute; width: 0; height: 0; }
.ic { width: 18px; height: 18px; flex: none; fill: none; stroke: currentColor; }
.tick { stroke: #7b52ab; }
.js { font: 700 7px Roboto, sans-serif; fill: currentColor; stroke: none; }

.app { display: grid; grid-template-rows: minmax(0, 1fr) 292px; height: 100vh; }
.upper { display: grid; grid-template-columns: 26px 371px minmax(0, 1fr); min-height: 0; }
.lower { display: grid; grid-template-columns: 26px minmax(0, 1fr); min-height: 0; }

.rail { overflow: hidden; border-right: 1px solid #000; }
.upper .rail { margin-top: -4px; }
.rail button { width: 36px; height: 35px; margin-left: -11px; padding-bottom: 1px; justify-content: center; }
.on { background: #10527f; }

.chest { display: flex; flex-direction: column; min-height: 0; border-right: 1px solid #000; border-bottom: 1px solid #000; }
.title { font-size: 15px; font-weight: 700; gap: 2px; }
.chest .title { height: 30px; padding: 0 0 4px 11px; flex: none; }
.tool { display: flex; height: 35px; flex: none; }
.name { flex: 1; gap: 7px; padding: 0 0 2px 6px; }
.gear { width: 36px; justify-content: center; padding-bottom: 1px; }
.more { width: 20px; justify-content: center; padding-bottom: 1px; background: #303134; }
.open { padding-right: 20px; }
.set { width: 100%; table-layout: fixed; border-spacing: 0; background: #d3d3ca; color: #111; line-height: 14px; }
.set th, .set td { padding: 0 0 0 2px; text-align: left; font-weight: 400; border-right: 1px solid #c2c2ba; height: 32px; }
.set th:last-child, .set td:last-child { border-right: 0; }
.set th { height: 18px; background: #dcdcd3; }
.set .gap td { height: 6px; }
.set .end td { height: 2px; }
.c-icon { width: 45px; }
.c-wide { width: 122px; }
.thumb { display: block; width: 28px; height: 32px; margin-left: 6px; fill: none; stroke: #111; color: #111; }
.tiny { font-size: 5px; text-anchor: middle; fill: #111; stroke: none; }
.size { display: flex; align-items: center; margin-top: auto; height: 36px; padding: 0 9px 0 8px; gap: 13px; }
.size input { flex: 1; min-width: 0; height: 16px; appearance: none; }
.size input::-webkit-slider-runnable-track { height: 4px; border-radius: 2px; background: #3d3e40; }
.size input::-webkit-slider-thumb { appearance: none; width: 12px; height: 12px; margin-top: -4px; border-radius: 6px; background: #5f6062; }

.doc { display: grid; grid-template-rows: 31px minmax(0, 1fr) 37px; min-width: 0; min-height: 0; }
.tabs { display: flex; overflow: hidden; }
.tab { flex: none; padding: 0 8px 5px; border-right: 1px solid #000; width: 158px; }
.tab.cur { width: 206px; background: #333436; justify-content: space-between; padding: 0 8px 5px 9px; }
.tab.t3 { width: 138px; }
.tab.t4 { width: 182px; }
.tab.t5 { width: 284px; }
.canvas { background: #333436; padding-left: 303px; overflow: hidden; min-height: 0; }
.page { width: 845px; height: 100%; background: #fff; border: solid #0a84d6; border-width: 0 1px; }
.plan { display: block; width: 100%; height: 100%; }
.plan .ln { stroke: #111; fill: none; stroke-width: .8; }
.plan .grid { stroke: #222; fill: none; stroke-width: 1; stroke-dasharray: 12 2 3 2; }
.plan text { text-anchor: middle; }
.lbl { font: 5px "DejaVu Sans Mono", monospace; stroke: #111; stroke-width: .2; fill: #111; }
.mk { font: 8px "Liberation Sans", sans-serif; fill: #222; }
.who { font: 6px "Liberation Sans", sans-serif; fill: #c4c4c4; }
.leg { font: 9px "Liberation Sans", sans-serif; fill: #999; }

.bar { display: flex; align-items: center; border-bottom: 1px solid #000; min-width: 0; overflow: hidden; }
.grp { display: flex; align-items: center; flex: none; }
.grp button { width: 36px; height: 36px; justify-content: center; }
.dim { color: #5a5b5d; }
.sep { width: 1px; height: 19px; background: #505153; margin: 0 2px; }
.views .sep { margin-right: 3px; }
.views { margin-right: 198px; }
.nav { margin-right: 239px; }
.pageno { width: 247px; height: 22px; margin: 0 1px; border: 1px solid #58595b; border-radius: 2px; text-align: center; }
.dims { display: flex; flex: none; gap: 20px; font-size: 14px; white-space: nowrap; }

.markups { display: flex; flex-direction: column; min-width: 0; min-height: 0; }
.head { display: flex; align-items: center; height: 36px; flex: none; }
.head .title { width: 120px; padding-left: 11px; }
.flt { width: 36px; height: 35px; justify-content: center; background: #8e5a12; }
.drop { width: 14px; justify-content: center; }
.eye { width: 36px; justify-content: center; }
.find { display: flex; align-items: center; width: 326px; height: 26px; margin-left: 1px; padding: 0 4px; border: 1px solid #58595b; border-radius: 2px; }
.find .ic { color: #c0c0c0; }
.find input { flex: 1; min-width: 0; padding-left: 7px; outline: 0; font-weight: 700; }
.find input::placeholder { color: #fff; opacity: 1; }
.clip { margin-left: 9px; }

.list { flex: 1; width: 100%; table-layout: fixed; border-spacing: 0; }
.w100 { width: 100px; }
.w103 { width: 103px; }
.w120 { width: 120px; }
.w130 { width: 130px; }
.w203 { width: 203px; }
.w218 { width: 218px; }
.list th, .list td { border-right: 1px solid #58595b; padding: 0 4px 0 2px; text-align: left; vertical-align: top; white-space: nowrap; }
.list th:last-child, .list td:last-child { border-right: 0; }
.list th { height: 35px; padding: 0 8px 0 9px; background: #3c3d3f; vertical-align: middle; }
.list th div { display: flex; align-items: center; }
.list th span { flex: 1; padding-bottom: 4px; }
.list .subj { border-top: 2px solid #ff9d0a; border-bottom: 2px solid #0a84d6; padding-left: 2px; }
.subj span { padding-left: 11px; }
.subj .f { margin-left: 16px; }
.list td { height: 26px; padding-top: 2px; }
.list .low { padding-top: 4px; }
.list .num { text-align: right; }
.list .num.low { padding-top: 5px; }
.list .line td { border-top: 2px solid #58595b; padding-top: 0; }
.list .fill td { height: auto; }
.group { font-weight: 700; }
.g { display: flex; align-items: center; height: 16px; gap: 6px; padding-left: 5px; }
.m { display: flex; height: 20px; padding-left: 42px; gap: 3px; }
.mi { width: 20px; height: 20px; fill: none; stroke: #fff; }
.pair { display: flex; justify-content: space-between; }
.list .chk { padding: 4px 0 0 42px; }
.chk input { display: block; appearance: none; width: 14px; height: 14px; border: 1px solid #6a6b6d; border-radius: 2px; }
```
